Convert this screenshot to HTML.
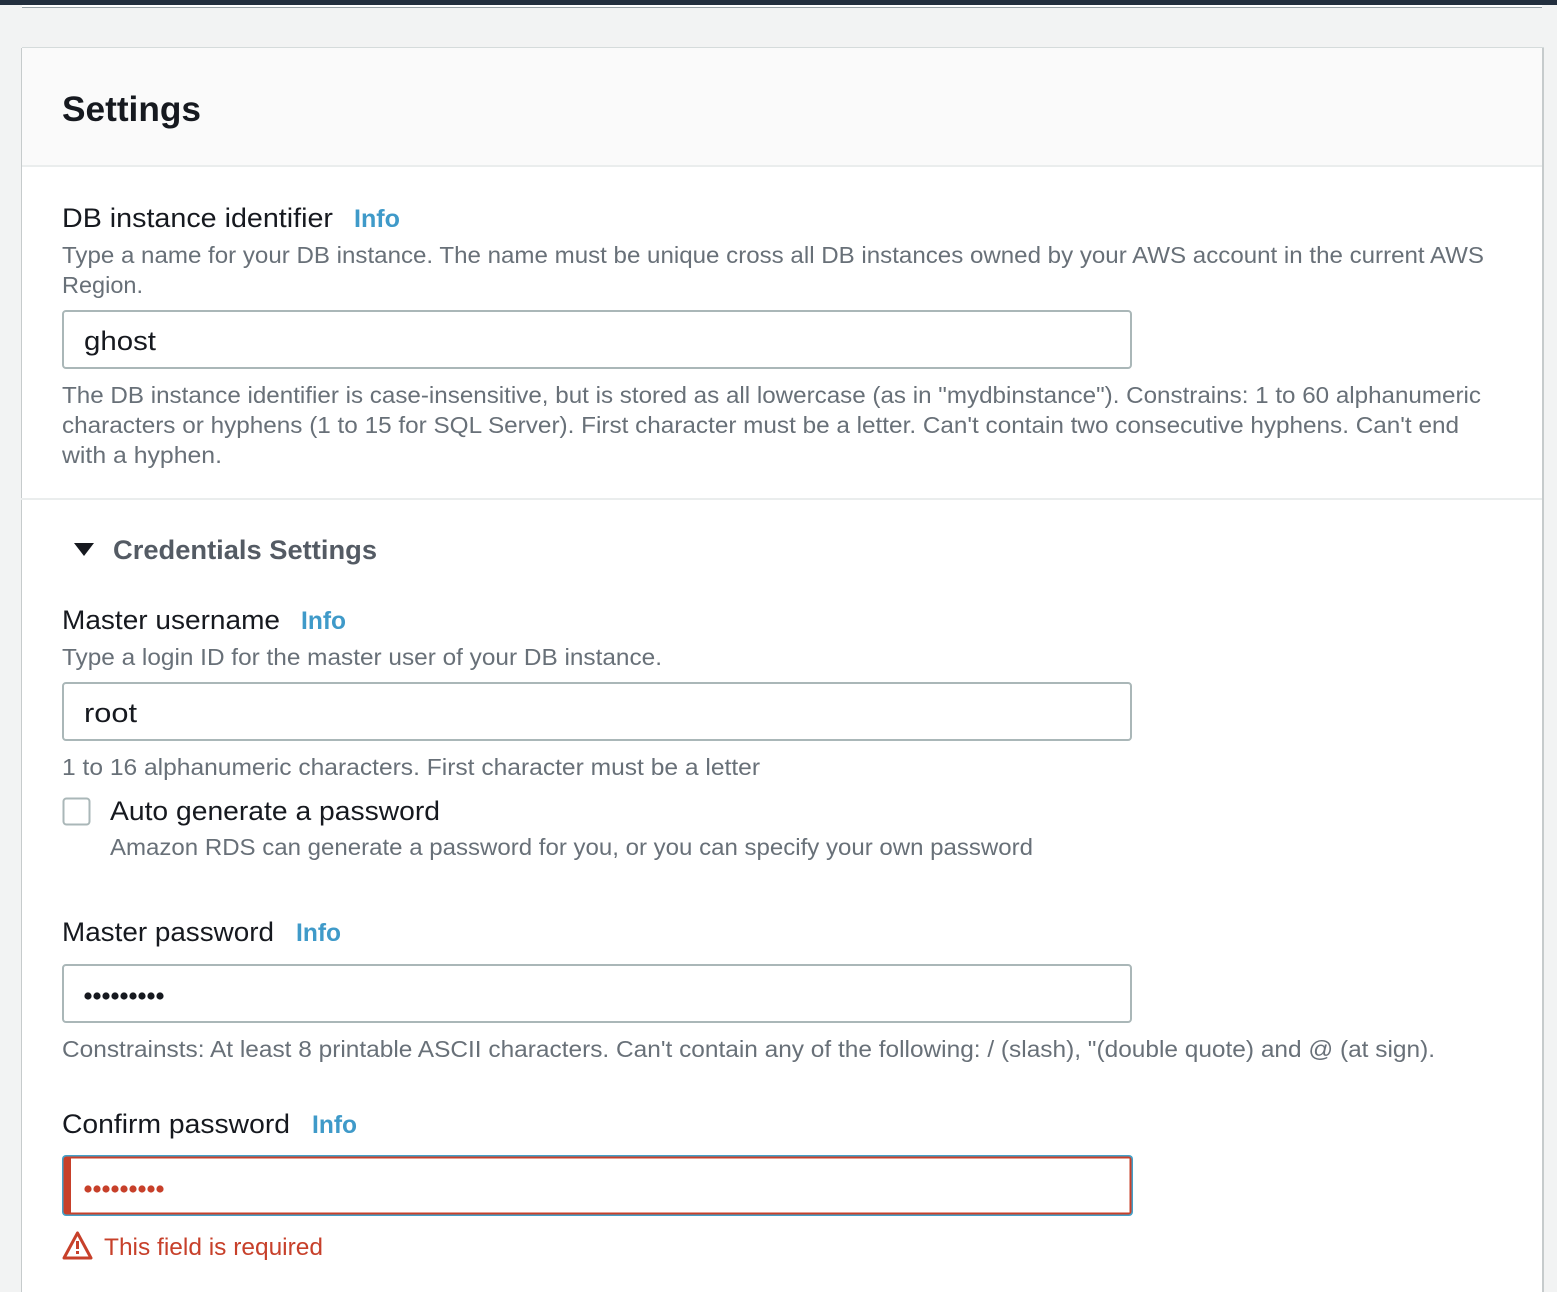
<!DOCTYPE html>
<html><head><meta charset="utf-8"><style>
html,body{margin:0;padding:0;width:1557px;height:1292px;overflow:hidden;background:#f2f3f3}
svg{display:block}
text{font-family:"Liberation Sans",sans-serif}
</style></head><body>
<svg width="1557" height="1292" viewBox="0 0 1557 1292" xmlns="http://www.w3.org/2000/svg">
<rect x="0" y="0" width="1557" height="1292" fill="#f2f3f3"/>
<rect x="0" y="0" width="1557" height="5" fill="#232f3e"/>
<rect x="22" y="5" width="1520" height="3" fill="#ffffff"/>
<rect x="22" y="7" width="1520" height="1" fill="#9aa3a8"/>
<rect x="22" y="47" width="1522" height="1260" fill="#d5dbdb"/>
<rect x="21" y="48" width="1521" height="1260" fill="#ffffff"/>
<rect x="21" y="48" width="1521" height="117" fill="#fafafa"/>
<rect x="21" y="165" width="1521" height="2" fill="#eaeded"/>
<rect x="1542" y="48" width="2" height="1250" fill="#c6cbcc"/>
<rect x="21" y="48" width="1" height="1250" fill="#c6cbcc"/>
<text x="62" y="121" font-size="35" font-weight="bold" fill="#16191f" textLength="139" lengthAdjust="spacingAndGlyphs">Settings</text>

<text x="62" y="227" font-size="27" fill="#16191f" textLength="271" lengthAdjust="spacingAndGlyphs">DB instance identifier</text>
<text x="354" y="227" font-size="25" font-weight="bold" fill="#3f9ac9" textLength="46" lengthAdjust="spacingAndGlyphs">Info</text>
<text x="62" y="263" font-size="23" fill="#687078" textLength="1422" lengthAdjust="spacingAndGlyphs">Type a name for your DB instance. The name must be unique cross all DB instances owned by your AWS account in the current AWS</text>
<text x="62" y="293" font-size="23" fill="#687078" textLength="81" lengthAdjust="spacingAndGlyphs">Region.</text>
<rect x="63" y="311" width="1068" height="57" rx="3" fill="#fff" stroke="#aab7b8" stroke-width="2"/>
<text x="84" y="350" font-size="27" fill="#16191f" textLength="72" lengthAdjust="spacingAndGlyphs">ghost</text>
<text x="62" y="403" font-size="23" fill="#687078" textLength="1419" lengthAdjust="spacingAndGlyphs">The DB instance identifier is case-insensitive, but is stored as all lowercase (as in "mydbinstance"). Constrains: 1 to 60 alphanumeric</text>
<text x="62" y="433" font-size="23" fill="#687078" textLength="1397" lengthAdjust="spacingAndGlyphs">characters or hyphens (1 to 15 for SQL Server). First character must be a letter. Can't contain two consecutive hyphens. Can't end</text>
<text x="62" y="463" font-size="23" fill="#687078" textLength="160" lengthAdjust="spacingAndGlyphs">with a hyphen.</text>
<rect x="21" y="498" width="1521" height="2" fill="#eaeded"/>

<path d="M74 543 L94 543 L84 556 Z" fill="#16191f"/>
<text x="113" y="559" font-size="27" font-weight="bold" fill="#545b64" textLength="264" lengthAdjust="spacingAndGlyphs">Credentials Settings</text>

<text x="62" y="629" font-size="27" fill="#16191f" textLength="218" lengthAdjust="spacingAndGlyphs">Master username</text>
<text x="301" y="629" font-size="25" font-weight="bold" fill="#3f9ac9" textLength="45" lengthAdjust="spacingAndGlyphs">Info</text>
<text x="62" y="665" font-size="23" fill="#687078" textLength="600" lengthAdjust="spacingAndGlyphs">Type a login ID for the master user of your DB instance.</text>
<rect x="63" y="683" width="1068" height="57" rx="3" fill="#fff" stroke="#aab7b8" stroke-width="2"/>
<text x="84" y="722" font-size="27" fill="#16191f" textLength="53" lengthAdjust="spacingAndGlyphs">root</text>
<text x="62" y="775" font-size="23" fill="#687078" textLength="698" lengthAdjust="spacingAndGlyphs">1 to 16 alphanumeric characters. First character must be a letter</text>
<rect x="63.5" y="798.5" width="26" height="26" rx="3" fill="#fff" stroke="#aab7b8" stroke-width="2"/>
<text x="110" y="820" font-size="27" fill="#16191f" textLength="330" lengthAdjust="spacingAndGlyphs">Auto generate a password</text>
<text x="110" y="855" font-size="23" fill="#687078" textLength="923" lengthAdjust="spacingAndGlyphs">Amazon RDS can generate a password for you, or you can specify your own password</text>

<text x="62" y="941" font-size="27" fill="#16191f" textLength="212" lengthAdjust="spacingAndGlyphs">Master password</text>
<text x="296" y="941" font-size="25" font-weight="bold" fill="#3f9ac9" textLength="45" lengthAdjust="spacingAndGlyphs">Info</text>
<rect x="63" y="965" width="1068" height="57" rx="3" fill="#fff" stroke="#aab7b8" stroke-width="2"/>
<g fill="#16191f">
<circle cx="88" cy="996" r="3.6"/><circle cx="97" cy="996" r="3.6"/><circle cx="106" cy="996" r="3.6"/><circle cx="115" cy="996" r="3.6"/><circle cx="124" cy="996" r="3.6"/><circle cx="133" cy="996" r="3.6"/><circle cx="142" cy="996" r="3.6"/><circle cx="151" cy="996" r="3.6"/><circle cx="160" cy="996" r="3.6"/>
</g>
<text x="62" y="1057" font-size="23" fill="#687078" textLength="1373" lengthAdjust="spacingAndGlyphs">Constrainsts: At least 8 printable ASCII characters. Can't contain any of the following: / (slash), "(double quote) and @ (at sign).</text>

<text x="62" y="1133" font-size="27" fill="#16191f" textLength="228" lengthAdjust="spacingAndGlyphs">Confirm password</text>
<text x="312" y="1133" font-size="25" font-weight="bold" fill="#3f9ac9" textLength="45" lengthAdjust="spacingAndGlyphs">Info</text>
<rect x="62" y="1155" width="1071" height="61" rx="4" fill="#44a0c8"/>
<rect x="63.5" y="1156.5" width="1068" height="58" rx="3" fill="#c7402a"/>
<rect x="71" y="1158.5" width="1058.5" height="54" fill="#fff"/>
<g fill="#c7402a">
<circle cx="88" cy="1189" r="3.6"/><circle cx="97" cy="1189" r="3.6"/><circle cx="106" cy="1189" r="3.6"/><circle cx="115" cy="1189" r="3.6"/><circle cx="124" cy="1189" r="3.6"/><circle cx="133" cy="1189" r="3.6"/><circle cx="142" cy="1189" r="3.6"/><circle cx="151" cy="1189" r="3.6"/><circle cx="160" cy="1189" r="3.6"/>
</g>
<path d="M77.5 1233 L91 1258 L64 1258 Z" fill="none" stroke="#c7402a" stroke-width="3" stroke-linejoin="round"/>
<rect x="76" y="1241" width="3" height="8" fill="#c7402a"/>
<rect x="76" y="1251" width="3" height="3" fill="#c7402a"/>
<text x="104" y="1255" font-size="24" fill="#c7402a" textLength="219" lengthAdjust="spacingAndGlyphs">This field is required</text>
</svg>
</body></html>
